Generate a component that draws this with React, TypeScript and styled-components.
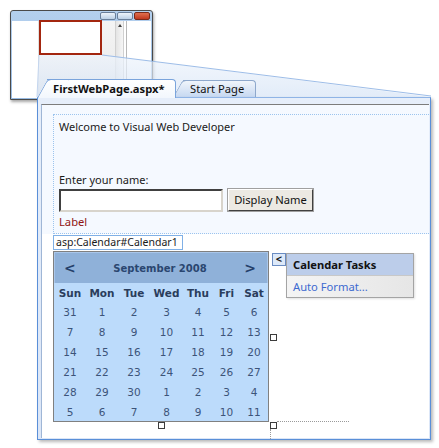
import styled, { createGlobalStyle } from "styled-components";

const GlobalStyle = createGlobalStyle`
  html, body {
    margin: 0;
    padding: 0;
    background: #ffffff;
  }
  body {
    font-family: "Noto Sans", "DejaVu Sans", sans-serif;
    color: #1a1a1a;
  }
`;

const days = ["Sun", "Mon", "Tue", "Wed", "Thu", "Fri", "Sat"];
const dates = [
  31, 1, 2, 3, 4, 5, 6,
  7, 8, 9, 10, 11, 12, 13,
  14, 15, 16, 17, 18, 19, 20,
  21, 22, 23, 24, 25, 26, 27,
  28, 29, 30, 1, 2, 3, 4,
  5, 6, 7, 8, 9, 10, 11,
];

function App() {
  return (
    <Canvas>
      <GlobalStyle />
      <ThumbWindow>
        <ThumbTitle>
          <WinButton />
          <WinButton />
          <WinButton $close />
        </ThumbTitle>
        <ThumbBody>
          <LeftPane />
          <DesignPane>
            <RedFrame />
          </DesignPane>
          <ScrollTrack>
            <ScrollArrow />
          </ScrollTrack>
          <RightPane />
        </ThumbBody>
      </ThumbWindow>

      <Callout width="439" height="448" viewBox="0 0 439 448">
        <defs>
          <linearGradient id="calloutFill" x1="0" y1="0" x2="0" y2="1">
            <stop offset="0" stopColor="#eef4fc" stopOpacity="0.7" />
            <stop offset="1" stopColor="#d6e4f6" stopOpacity="0.7" />
          </linearGradient>
        </defs>
        <polygon points="39,55 102,55 431,97 37,97" fill="url(#calloutFill)" />
        <line x1="102" y1="55" x2="431" y2="96" stroke="#9dbde8" strokeWidth="1" />
        <line x1="39" y1="55" x2="37" y2="97" stroke="#c4d6ef" strokeWidth="1" />
      </Callout>

      <Editor>
        <TabStrip>
          <Tab $active>FirstWebPage.aspx*</Tab>
          <Tab>Start Page</Tab>
        </TabStrip>
        <Panel>
          <Surface>
            <FormArea>
              <FormBox>
                <Line>Welcome to Visual Web Developer</Line>
                <Line $gap={38}>Enter your name:</Line>
                <InputRow>
                  <TextBox />
                  <PushButton>Display Name</PushButton>
                </InputRow>
                <RedLabel>Label</RedLabel>
              </FormBox>
            </FormArea>

            <CalendarRow>
              <CalendarBlock>
                <ControlTag>asp:Calendar#Calendar1</ControlTag>
                <Calendar>
                  <CalHeader>
                    <NavArrow>&lt;</NavArrow>
                    <MonthTitle>September 2008</MonthTitle>
                    <NavArrow>&gt;</NavArrow>
                  </CalHeader>
                  <CalGrid>
                    {days.map((d) => (
                      <DayName key={d}>{d}</DayName>
                    ))}
                    {dates.map((n, i) => (
                      <DateCell key={i}>{n}</DateCell>
                    ))}
                  </CalGrid>
                  <Handle style={{ left: 216, top: 82 }} />
                  <Handle style={{ left: 104, top: 170 }} />
                  <Handle style={{ left: 216, top: 170 }} />
                  <GuideH />
                  <GuideV />
                </Calendar>
              </CalendarBlock>

              <SmartTag>
                <SmartTagButton>&lt;</SmartTagButton>
                <TaskPanel>
                  <TaskHeader>Calendar Tasks</TaskHeader>
                  <TaskLink>Auto Format...</TaskLink>
                </TaskPanel>
              </SmartTag>
            </CalendarRow>
          </Surface>
        </Panel>
      </Editor>
    </Canvas>
  );
}

export default App;

const Canvas = styled.div`
  position: relative;
  width: 439px;
  height: 448px;
  overflow: hidden;
  background: #ffffff;
`;

/* small window thumbnail */

const ThumbWindow = styled.div`
  margin: 10px 0 0 10px;
  width: 141px;
  height: 88px;
  border: 1px solid #4a4a4a;
  border-radius: 3px 3px 0 0;
  background: linear-gradient(#b4d0ee, #98bbe3);
  box-shadow: 1px 2px 3px rgba(0, 0, 0, 0.35);
  display: flex;
  flex-direction: column;
`;

const ThumbTitle = styled.div`
  height: 9px;
  display: flex;
  justify-content: flex-end;
  align-items: flex-start;
  gap: 1px;
  padding: 1px 2px 0 0;
`;

const WinButton = styled.div<{ $close?: boolean }>`
  width: 14px;
  height: 6px;
  border: 1px solid ${(p) => (p.$close ? "#7a2a1a" : "#6a7f9a")};
  border-radius: 2px;
  background: ${(p) =>
    p.$close
      ? "linear-gradient(#e07050, #c0381e)"
      : "linear-gradient(#eef4fb, #bcd0e6)"};
`;

const ThumbBody = styled.div`
  flex: 1;
  display: flex;
  margin: 0 1px 1px 1px;
  background: #ffffff;
`;

const LeftPane = styled.div`
  width: 26px;
  border-right: 1px solid #e0e0e0;
  background: #ffffff;
`;

const DesignPane = styled.div`
  width: 76px;
  background: linear-gradient(#f4f4f4, #e8e8e8);
`;

const RedFrame = styled.div`
  margin-top: -1px;
  width: 59px;
  height: 31px;
  border: 2px solid #a3260f;
  background: #ffffff;
`;

const ScrollTrack = styled.div`
  width: 7px;
  background: linear-gradient(90deg, #e4e4e4, #f6f6f6);
  border-left: 1px solid #d0d0d0;
  border-right: 1px solid #d0d0d0;
  display: flex;
  justify-content: center;
`;

const ScrollArrow = styled.div`
  margin-top: 3px;
  width: 0;
  height: 0;
  border-left: 2px solid transparent;
  border-right: 2px solid transparent;
  border-bottom: 3px solid #404040;
`;

const RightPane = styled.div`
  flex: 1;
  margin-left: 2px;
  border-left: 1px solid #b8b8b8;
  background: #ffffff;
`;

const Callout = styled.svg`
  position: absolute;
  left: 0;
  top: 0;
  z-index: 1;
  pointer-events: none;
`;

/* zoomed editor */

const Editor = styled.div`
  position: relative;
  z-index: 2;
  margin: -21px 0 0 37px;
  width: 394px;
`;

const TabStrip = styled.div`
  display: flex;
  align-items: flex-end;
  height: 18px;
  padding-left: 10px;
`;

const Tab = styled.div<{ $active?: boolean }>`
  position: relative;
  z-index: ${(p) => (p.$active ? 3 : 1)};
  box-sizing: border-box;
  width: ${(p) => (p.$active ? 129 : 73)}px;
  height: ${(p) => (p.$active ? 19 : 17)}px;
  margin-left: ${(p) => (p.$active ? 0 : 7)}px;
  margin-bottom: ${(p) => (p.$active ? -1 : 0)}px;
  padding: ${(p) => (p.$active ? "2px 0 0 6px" : "1px 0 0 7px")};
  border: 1px solid ${(p) => (p.$active ? "#7aa4dc" : "#8ea8cc")};
  border-left: none;
  border-bottom: none;
  border-top-right-radius: 4px;
  background: ${(p) =>
    p.$active
      ? "linear-gradient(#ffffff, #f2f7fd)"
      : "linear-gradient(#f0f5fb, #c6d8f1)"};
  font-size: 11.2px;
  font-weight: ${(p) => (p.$active ? 700 : 400)};
  color: #111111;
  line-height: 14px;
  white-space: nowrap;

  &::before {
    content: "";
    position: absolute;
    z-index: -1;
    left: -10px;
    top: -1px;
    width: 22px;
    height: calc(100% + 1px);
    box-sizing: border-box;
    border-left: 1px solid ${(p) => (p.$active ? "#7aa4dc" : "#8ea8cc")};
    border-top: 1px solid ${(p) => (p.$active ? "#7aa4dc" : "#8ea8cc")};
    border-top-left-radius: 4px;
    background: ${(p) =>
      p.$active
        ? "linear-gradient(#ffffff, #f2f7fd)"
        : "linear-gradient(#f0f5fb, #c6d8f1)"};
    transform: skewX(-29deg);
    transform-origin: bottom left;
  }
`;

const Panel = styled.div`
  position: relative;
  z-index: 2;
  box-sizing: border-box;
  height: 343px;
  padding: 6px 1px 1px 3px;
  border: 1px solid #5a8fd8;
  border-top-color: #8fb4e6;
  background: linear-gradient(#e6eefa, #dbe6f7);
  box-shadow: 2px 2px 3px rgba(0, 0, 0, 0.28);
`;

const Surface = styled.div`
  box-sizing: border-box;
  height: 100%;
  border-top: 1px solid #7c7c7c;
  border-left: 1px solid #9fb6d6;
  background: #ffffff;
`;

const FormArea = styled.div`
  padding: 9px 0 0 11px;
  background: #f5f9ff;
`;

const FormBox = styled.div`
  box-sizing: border-box;
  height: 120px;
  padding: 4px 0 0 5px;
  border: 1px dotted #9cc4ee;
  border-right: none;
`;

const Line = styled.div<{ $gap?: number }>`
  margin-top: ${(p) => p.$gap ?? 0}px;
  font-size: 11px;
  line-height: 15px;
  color: #1a1a1a;
`;

const InputRow = styled.div`
  display: flex;
  align-items: center;
  gap: 4px;
  margin-top: 1px;
`;

const TextBox = styled.div`
  box-sizing: border-box;
  width: 164px;
  height: 23px;
  border: 2px solid;
  border-color: #404040 #d8d4cc #d8d4cc #404040;
  background: #ffffff;
`;

const PushButton = styled.div`
  box-sizing: border-box;
  width: 87px;
  height: 24px;
  border: 2px solid;
  border-color: #ffffff #404040 #404040 #ffffff;
  outline: 1px solid #a0a0a0;
  outline-offset: -1px;
  background: #ece9e3;
  font-size: 11.2px;
  line-height: 20px;
  text-align: center;
  color: #111111;
`;

const RedLabel = styled.div`
  margin-top: 2px;
  font-size: 11.2px;
  line-height: 15px;
  color: #901414;
`;

const CalendarRow = styled.div`
  display: flex;
  align-items: flex-start;
  padding: 1px 0 0 11px;
`;

const CalendarBlock = styled.div`
  display: flex;
  flex-direction: column;
  align-items: flex-start;
  gap: 1px;
`;

const ControlTag = styled.div`
  box-sizing: border-box;
  width: 130px;
  height: 15px;
  padding-left: 2px;
  border: 1px solid #80b0e6;
  background: #ffffff;
  font-size: 10.5px;
  line-height: 13px;
  color: #1a1a1a;
  white-space: nowrap;
`;

const Calendar = styled.div`
  position: relative;
  box-sizing: border-box;
  width: 216px;
  height: 171px;
  border: 1px solid #808080;
  background: #bcdbfb;
  font-family: "DejaVu Sans", Verdana, sans-serif;
`;

const CalHeader = styled.div`
  display: flex;
  align-items: center;
  justify-content: space-between;
  height: 30px;
  padding: 0 11px 0 9px;
  background: #8fb1d9;
  border: 1px solid #a9c6ea;
  border-bottom: none;
`;

const NavArrow = styled.div`
  font-size: 14px;
  font-weight: 700;
  color: #25406a;
`;

const MonthTitle = styled.div`
  font-size: 10px;
  font-weight: 700;
  color: #2a4670;
`;

const CalGrid = styled.div`
  display: grid;
  grid-template-columns: 32px 32px 32px 33px 30px 27px 28px;
  grid-template-rows: 19px repeat(6, 20px);
  align-items: center;
  justify-items: center;
`;

const DayName = styled.div`
  font-size: 10.5px;
  font-weight: 700;
  color: #2a3d5c;
`;

const DateCell = styled.div`
  font-size: 10.5px;
  color: #3c5479;
`;

const Handle = styled.div`
  position: absolute;
  box-sizing: border-box;
  width: 7px;
  height: 7px;
  border: 1px solid #3c3c3c;
  background: #ffffff;
`;

const GuideH = styled.div`
  position: absolute;
  left: 223px;
  top: 169px;
  width: 72px;
  border-top: 1px dotted #9a9a9a;
`;

const GuideV = styled.div`
  position: absolute;
  left: 216px;
  top: 177px;
  height: 10px;
  border-left: 1px dotted #9a9a9a;
`;

const SmartTag = styled.div`
  display: flex;
  align-items: flex-start;
  margin: 18px 0 0 3px;
`;

const SmartTagButton = styled.div`
  box-sizing: border-box;
  width: 14px;
  height: 13px;
  border: 1px solid #6a8cc2;
  background: #dde9f9;
  font-size: 11px;
  font-weight: 700;
  line-height: 10px;
  text-align: center;
  color: #1a1a1a;
`;

const TaskPanel = styled.div`
  box-sizing: border-box;
  width: 128px;
  border: 1px solid #a4a4a4;
  box-shadow: 1px 1px 2px rgba(0, 0, 0, 0.12);
`;

const TaskHeader = styled.div`
  height: 21px;
  padding-left: 6px;
  background: #bccdea;
  border-bottom: 1px solid #c8c8c8;
  font-size: 11.2px;
  font-weight: 700;
  line-height: 21px;
  color: #111111;
`;

const TaskLink = styled.div`
  height: 21px;
  padding-left: 6px;
  background: linear-gradient(90deg, #f4f4f4, #e6e6e6);
  font-size: 11.2px;
  line-height: 21px;
  color: #3d6ad0;
`;
